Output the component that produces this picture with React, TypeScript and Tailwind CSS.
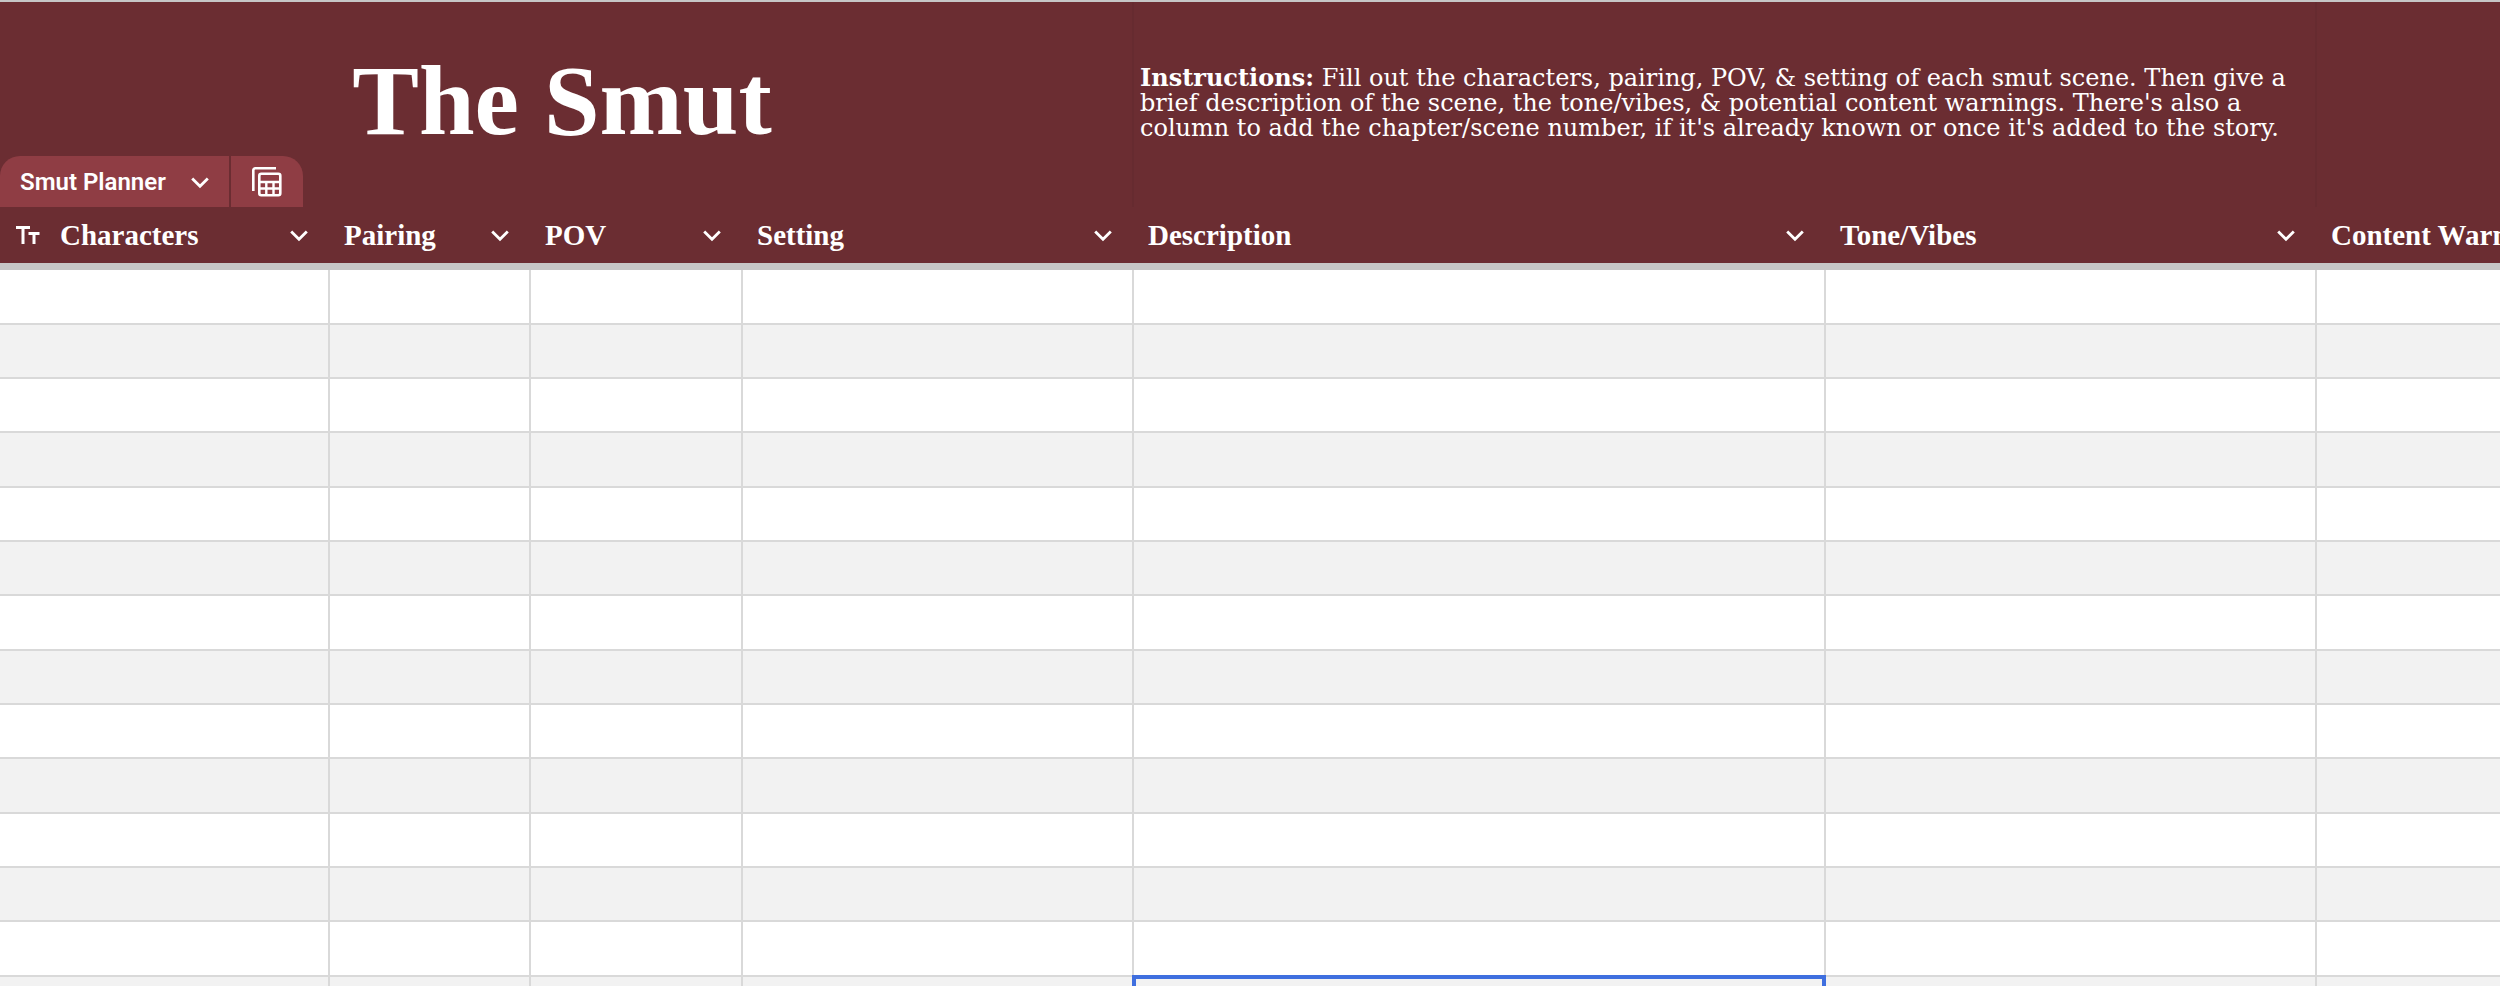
import React from 'react';

type Column = {
  label: string;
  width: string;
  typeIcon?: boolean;
};

const columns: Column[] = [
  { label: 'Characters', width: 'w-[330px]', typeIcon: true },
  { label: 'Pairing', width: 'w-[201px]' },
  { label: 'POV', width: 'w-[212px]' },
  { label: 'Setting', width: 'w-[391px]' },
  { label: 'Description', width: 'w-[692px]' },
  { label: 'Tone/Vibes', width: 'w-[491px]' },
  { label: 'Content Warnings', width: 'w-auto' },
];

const ROW_COUNT = 14;
const selected = { row: 13, col: 4 };

const Chevron: React.FC = () => (
  <svg width="18" height="14" viewBox="0 0 18 14" fill="none" aria-hidden="true">
    <path d="M1.2 3.400 9 11.200l7.800-7.800" stroke="currentColor" strokeWidth="2.800" />
  </svg>
);

const TextTypeIcon: React.FC = () => (
  <svg width="26" height="18" viewBox="0 0 26 18" fill="none" aria-hidden="true">
    <path d="M2 1.500h14M9 1.500V18M14.500 7.500H25.500M20 7.500V18" stroke="currentColor" strokeWidth="3" />
  </svg>
);

const TableIcon: React.FC = () => (
  <svg width="30" height="30" viewBox="0 0 30 30" fill="none" stroke="currentColor" aria-hidden="true">
    <path d="M1.300 24V3.300a2 2 0 0 1 2-2H24" strokeWidth="2.600" />
    <rect x="7.300" y="6.700" width="21" height="21.500" rx="2" strokeWidth="2.600" />
    <path d="M7 15h22M7 21.500h22M14.300 15v13M21.500 15v13" strokeWidth="2.400" />
  </svg>
);

const TableTab: React.FC = () => (
  <div className="absolute bottom-0 left-0 flex h-[51px] gap-0.5 font-['Roboto',sans-serif]">
    <button
      type="button"
      className="flex w-[229px] items-center justify-between rounded-tl-[20px] bg-[#8f3d44] px-5 text-[24px] font-semibold"
    >
      Smut Planner
      <Chevron />
    </button>
    <button
      type="button"
      aria-label="Table views"
      className="flex w-[72px] items-center justify-center rounded-tr-[20px] bg-[#8f3d44]"
    >
      <TableIcon />
    </button>
  </div>
);

const Banner: React.FC = () => (
  <header className="relative grid h-[205px] grid-cols-[1134px_1183px_1fr] bg-[#6b2d32]">
    <div className="flex items-center justify-center border-r-2 border-[#662b30] pr-2 pb-2">
      <h1 className="text-[100px] leading-none font-bold">The Smut</h1>
    </div>
    <div className="flex items-center border-r-2 border-[#662b30] pb-1 pl-1.5">
      <p className="font-['DejaVu_Serif',serif] text-[24px] leading-[25px] whitespace-nowrap">
        <strong>Instructions:</strong> Fill out the characters, pairing, POV, &amp; setting of each smut scene. Then give a
        <br />
        brief description of the scene, the tone/vibes, &amp; potential content warnings. There's also a
        <br />
        column to add the chapter/scene number, if it's already known or once it's added to the story.
      </p>
    </div>
    <TableTab />
  </header>
);

const App: React.FC = () => {
  return (
    <main className="h-screen overflow-hidden border-t-2 border-[#c6c6c6] bg-white font-['Liberation_Serif',serif] text-white">
      <Banner />
      <table className="w-full table-fixed border-separate border-spacing-0">
        <thead>
          <tr className="h-[63px] bg-[#6b2d32]">
            {columns.map((column) => (
              <th
                key={column.label}
                className={`${column.width} overflow-hidden border-b-[7px] border-[#c6c6c6] p-0 text-left`}
              >
                <div className="flex items-center pr-[22px] pl-3.5 text-[29px] leading-8 whitespace-nowrap">
                  {column.typeIcon && (
                    <span className="mr-5">
                      <TextTypeIcon />
                    </span>
                  )}
                  <span className="flex-1">{column.label}</span>
                  <button type="button" aria-label={`${column.label} options`}>
                    <Chevron />
                  </button>
                </div>
              </th>
            ))}
          </tr>
        </thead>
        <tbody>
          {Array.from({ length: ROW_COUNT }, (_, row) => (
            <tr key={row} className="h-[54px] bg-white even:bg-[#f2f2f2] nth-[3n+1]:h-[55px]">
              {columns.map((column, col) => (
                <td key={column.label} className="relative border-r-2 border-b-2 border-[#d9d9d9] p-0 last:border-r-0">
                  {row === selected.row && col === selected.col && (
                    <div className="absolute -inset-0.5 border-4 border-[#3f6fdf]" />
                  )}
                </td>
              ))}
            </tr>
          ))}
        </tbody>
      </table>
    </main>
  );
};

export default App;
